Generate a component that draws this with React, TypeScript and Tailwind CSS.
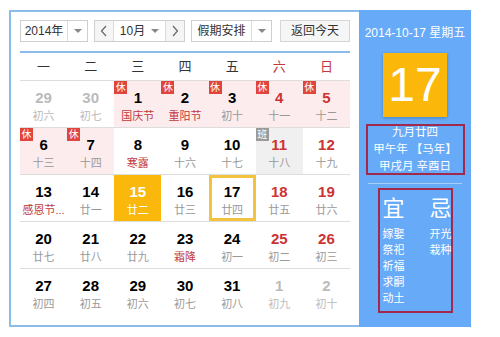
import React from "react";

type Cell = {
  day: number;
  lunar: string;
  muted?: boolean;
  red?: boolean;
  fest?: boolean;
  holiday?: boolean;
  work?: boolean;
  selected?: boolean;
  today?: boolean;
};

const rows: Cell[][] = [
  [
    { day: 29, lunar: "初六", muted: true },
    { day: 30, lunar: "初七", muted: true },
    { day: 1, lunar: "国庆节", fest: true, holiday: true },
    { day: 2, lunar: "重阳节", fest: true, holiday: true },
    { day: 3, lunar: "初十", holiday: true },
    { day: 4, lunar: "十一", red: true, holiday: true },
    { day: 5, lunar: "十二", red: true, holiday: true },
  ],
  [
    { day: 6, lunar: "十三", holiday: true },
    { day: 7, lunar: "十四", holiday: true },
    { day: 8, lunar: "寒露", fest: true },
    { day: 9, lunar: "十六" },
    { day: 10, lunar: "十七" },
    { day: 11, lunar: "十八", red: true, work: true },
    { day: 12, lunar: "十九", red: true },
  ],
  [
    { day: 13, lunar: "感恩节...", fest: true },
    { day: 14, lunar: "廿一" },
    { day: 15, lunar: "廿二", selected: true },
    { day: 16, lunar: "廿三" },
    { day: 17, lunar: "廿四", today: true },
    { day: 18, lunar: "廿五", red: true },
    { day: 19, lunar: "廿六", red: true },
  ],
  [
    { day: 20, lunar: "廿七" },
    { day: 21, lunar: "廿八" },
    { day: 22, lunar: "廿九" },
    { day: 23, lunar: "霜降", fest: true },
    { day: 24, lunar: "初一" },
    { day: 25, lunar: "初二", red: true },
    { day: 26, lunar: "初三", red: true },
  ],
  [
    { day: 27, lunar: "初四" },
    { day: 28, lunar: "初五" },
    { day: 29, lunar: "初六" },
    { day: 30, lunar: "初七" },
    { day: 31, lunar: "初八" },
    { day: 1, lunar: "初九", muted: true },
    { day: 2, lunar: "初十", muted: true },
  ],
];

const weekdays = ["一", "二", "三", "四", "五", "六", "日"];

function Caret() {
  return <span className="block w-0 h-0 border-x-[4px] border-x-transparent border-t-[4px] border-t-[#888]" />;
}

function Chevron({ dir }: { dir: "l" | "r" }) {
  return (
    <svg width="8" height="12" viewBox="0 0 8 12" fill="none" stroke="#666" strokeWidth="1.2">
      {dir === "l" ? <path d="M6 1 L1.5 6 L6 11" /> : <path d="M2 1 L6.5 6 L2 11" />}
    </svg>
  );
}

function DayCell({ c }: { c: Cell }) {
  let bg = "bg-white";
  if (c.holiday) bg = "bg-[#fdeced]";
  if (c.work) bg = "bg-[#f0f0f0]";
  if (c.selected) bg = "bg-[#fbb80c]";

  let numColor = "text-black";
  if (c.red) numColor = "text-[#cc3333]";
  if (c.muted) numColor = "text-[#bbbbbb]";
  if (c.selected) numColor = "text-white";

  let lunarColor = "text-[#999999]";
  if (c.fest) lunarColor = "text-[#c0383d]";
  if (c.muted) lunarColor = "text-[#bbbbbb]";
  if (c.selected) lunarColor = "text-white";

  return (
    <div className={`relative h-[46px] flex flex-col items-center ${bg}`}>
      {c.today && <div className="absolute inset-0 border-[3px] border-[#f3c23f]" />}
      {c.holiday && (
        <span className="absolute left-0 top-0 w-[13px] h-[13px] bg-[#e0443a] text-white text-[10px] leading-[13px] text-center">
          休
        </span>
      )}
      {c.work && (
        <span className="absolute left-0 top-0 w-[13px] h-[13px] bg-[#9a9a9a] text-white text-[10px] leading-[13px] text-center">
          班
        </span>
      )}
      <span className={`mt-[7px] text-[15px] leading-[20px] font-bold ${numColor}`}>{c.day}</span>
      <span className={`text-[11px] leading-[16px] whitespace-nowrap ${lunarColor}`}>{c.lunar}</span>
    </div>
  );
}

export default function App() {
  return (
    <div
      className="w-[500px] h-[337px] bg-white pt-[10px] pl-[9px]"
      style={{ fontFamily: '"Liberation Sans", "Noto Sans CJK SC", sans-serif' }}
    >
      <div className="flex h-[317px] w-[462px]">
        {/* left: calendar */}
        <div className="w-[350px] h-full border-2 border-r-0 border-[#8cbdea] px-[9px] pt-[8px]">
          {/* toolbar */}
          <div className="flex items-center h-[22px] text-[12px] text-[#333]">
            <div className="flex h-full w-[68px] border border-[#cfcfcf] bg-white">
              <div className="flex-1 flex items-center justify-center">2014年</div>
              <div className="w-[20px] flex items-center justify-center border-l border-[#dcdcdc]">
                <Caret />
              </div>
            </div>
            <div className="flex h-full w-[91px] ml-[6px] border border-[#cfcfcf] bg-white">
              <div className="w-[19px] flex items-center justify-center bg-[#f5f5f5] border-r border-[#dcdcdc]">
                <Chevron dir="l" />
              </div>
              <div className="flex-1 flex items-center justify-center gap-[6px]">
                10月 <Caret />
              </div>
              <div className="w-[19px] flex items-center justify-center bg-[#f5f5f5] border-l border-[#dcdcdc]">
                <Chevron dir="r" />
              </div>
            </div>
            <div className="flex h-full w-[81px] ml-[6px] border border-[#cfcfcf] bg-white">
              <div className="flex-1 flex items-center justify-center">假期安排</div>
              <div className="w-[20px] flex items-center justify-center border-l border-[#dcdcdc]">
                <Caret />
              </div>
            </div>
            <div className="flex h-full w-[70px] ml-[8px] items-center justify-center border border-[#d6d6d6] bg-[#f6f6f6]">
              返回今天
            </div>
          </div>

          <div className="mt-[9px] h-[2px] bg-[#8cbdea]" />

          {/* week header */}
          <div className="grid grid-cols-7 h-[28px] items-center border-b border-[#dddddd] text-[13px]">
            {weekdays.map((w, i) => (
              <div key={w} className={`text-center ${i >= 5 ? "text-[#c0383d]" : "text-[#333]"}`}>
                {w}
              </div>
            ))}
          </div>

          {/* days */}
          {rows.map((r, ri) => (
            <div key={ri} className={`grid grid-cols-7 ${ri < 4 ? "border-b border-[#dddddd]" : ""}`}>
              {r.map((c, ci) => (
                <DayCell key={ci} c={c} />
              ))}
            </div>
          ))}
        </div>

        {/* right: detail panel */}
        <div className="w-[112px] h-full bg-[#66aaf8] flex flex-col items-center text-white">
          <div className="mt-[16px] text-[12px] leading-[14px] whitespace-nowrap">2014-10-17 星期五</div>
          <div className="mt-[13px] w-[64px] h-[64px] bg-[#fcb80a] shadow-[0_1px_3px_rgba(0,0,0,0.25)] flex items-center justify-center text-[48px] leading-none">
            17
          </div>
          <div className="mt-[7px] w-[99px] h-[51px] border-2 border-[#a3294a] flex flex-col items-center justify-center text-[11.5px] leading-[17px] whitespace-nowrap">
            <span>九月廿四</span>
            <span>甲午年 【马年】</span>
            <span>甲戌月 辛酉日</span>
          </div>
          <div className="mt-[8px] w-[94px] h-px bg-[#a9cffa]" />
          <div className="mt-[4px] w-[75px] h-[125px] border-2 border-[#a3294a] flex pl-[3px] pt-[6px] whitespace-nowrap">
            <div className="w-[47px] shrink-0 flex flex-col">
              <span className="text-[22px] leading-[26px]">宜</span>
              <div className="mt-[4px] flex flex-col text-[11px] leading-[16px]">
                <span>嫁娶</span>
                <span>祭祀</span>
                <span>祈福</span>
                <span>求嗣</span>
                <span>动土</span>
              </div>
            </div>
            <div className="shrink-0 flex flex-col">
              <span className="text-[22px] leading-[26px]">忌</span>
              <div className="mt-[4px] flex flex-col text-[11px] leading-[16px]">
                <span>开光</span>
                <span>栽种</span>
              </div>
            </div>
          </div>
        </div>
      </div>
    </div>
  );
}
